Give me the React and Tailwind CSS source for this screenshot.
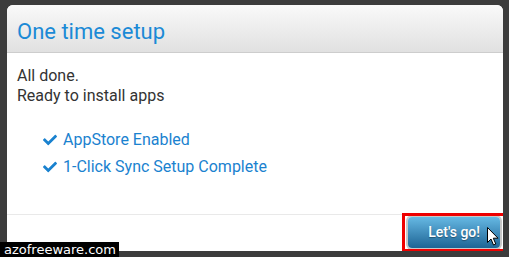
import React from 'react';
import { FaCheck } from 'react-icons/fa';

const ITEMS = ['AppStore Enabled', '1-Click Sync Setup Complete'];

const Cursor = () => (
  <svg width="12" height="19" viewBox="0 0 12 19" className="absolute left-[79px] top-[10px]">
    <path d="M0.5 0.5 L0.5 15.5 L4 12 L6.5 18 L8.8 17 L6.3 11.2 L11 11.2 Z" fill="#fff" stroke="#000" strokeWidth="1" strokeLinejoin="miter" />
  </svg>
);

const App = () => {
  return (
    <div className="relative w-[509px] h-[257px] bg-[#3c3c3c] pt-[5px] pl-[7px] pr-[6px] pb-[6px] font-['Roboto',sans-serif] overflow-hidden">
      <div className="h-full flex flex-col bg-white rounded-t-[6px] overflow-hidden">
        {/* Header */}
        <div className="h-[48px] shrink-0 bg-gradient-to-b from-[#f9f9f9] to-[#e1e1e1] border-b border-[#cdcdcd] pt-[14px] px-[10px]">
          <h1 className="text-[22px] leading-[26px] text-[#1b8ad6]">One time setup</h1>
        </div>

        {/* Body */}
        <div className="flex-1 px-[10px] pt-[13px]">
          <p className="text-[16px] leading-[20px] text-[#333]">All done.</p>
          <p className="text-[16px] leading-[20px] text-[#333]">Ready to install apps</p>
          <ul className="mt-[20px] pl-[26px]">
            {ITEMS.map((item) => (
              <li key={item} className="flex items-center gap-[6px] text-[16px] leading-[27px] text-[#1a82cf]">
                <FaCheck className="w-[14px] h-[14px] text-[#1a82cf]" />
                <span>{item}</span>
              </li>
            ))}
          </ul>
        </div>

        {/* Footer */}
        <div className="h-[37px] shrink-0 border-t border-[#e9e9e9] flex justify-end items-start pt-[2px] pr-[3px]">
          <div className="relative">
            <button className="w-[92px] h-[31px] rounded-[4px] bg-gradient-to-b from-[#66b9e4] to-[#1d6595] shadow-[0_0_0_2px_#c8c8c8] text-white text-[14px] font-medium flex items-center justify-end pr-[20px] [text-shadow:0_1px_1px_rgba(0,0,0,0.35)]">
              Let's go!
            </button>
            <div className="absolute -left-[6px] -right-[8px] -top-[4px] -bottom-[4px] border-[3px] border-[#ee0000]" />
            <Cursor />
          </div>
        </div>
      </div>

      {/* Watermark */}
      <div className="absolute left-0 bottom-0 w-[119px] h-[15px] bg-black flex items-center pl-[4px]">
        <span className="text-white text-[13px] leading-[15px] font-['DejaVu_Sans',sans-serif]">azofreeware.com</span>
      </div>
    </div>
  );
};

export default App;
